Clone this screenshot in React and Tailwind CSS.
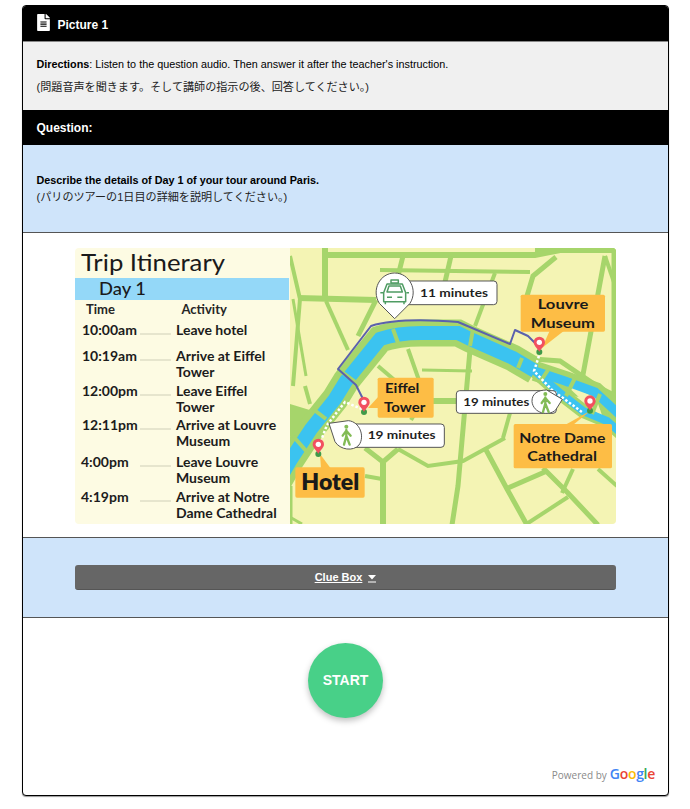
import React from 'react';
import { FaFileAlt } from 'react-icons/fa';

const rows = [
    { time: '10:00am', x: 82, y: 335, lines: ['Leave hotel'] },
    { time: '10:19am', x: 82, y: 361, lines: ['Arrive at Eiffel', 'Tower'] },
    { time: '12:00pm', x: 82, y: 396, lines: ['Leave Eiffel', 'Tower'] },
    { time: '12:11pm', x: 82, y: 430, lines: ['Arrive at Louvre', 'Museum'] },
    { time: '4:00pm', x: 81, y: 467, lines: ['Leave Louvre', 'Museum'] },
    { time: '4:19pm', x: 81, y: 502, lines: ['Arrive at Notre', 'Dame Cathedral'] },
];

// jalan pada peta: [path, tebal]
const roads = [
    ['M325 255 H535 L560 250 H620', 6],
    ['M380 270 L530 272', 4],
    ['M556 257 L533 276 L524 306', 5],
    ['M605 256 L582 380 L575 396', 5],
    ['M605 256 L616 288', 4],
    ['M495 273 L475 326', 4],
    ['M614 248 V400', 5],
    ['M325 248 V300', 6],
    ['M298 298 L376 300', 6],
    ['M403 256 L396 284', 5],
    ['M451 256 L445 282', 5],
    ['M290 256 L300 299 L293 386', 4],
    ['M293 299 L306 376', 3],
    ['M326 301 L348 350', 4],
    ['M376 300 L358 336', 5],
    ['M408 349 L421 386 L428 402', 4],
    ['M378 366 L412 395', 4],
    ['M422 370 L472 371', 3],
    ['M305 386 L310 404', 4],
    ['M433 401 H500', 6],
    ['M411 420 L420 405', 4],
    ['M383 463 V525', 6],
    ['M365 476 L382 479', 4],
    ['M365 448 L383 462 L398 449', 5],
    ['M398 449 L428 466 L463 461 L505 438', 4],
    ['M510 413 L503 438', 4],
    ['M470 350 L458 486 L452 525', 5],
    ['M485 448 L507 489 L527 525', 5],
    ['M508 488 L547 471', 5],
    ['M543 468 L568 493 L598 525', 5],
    ['M568 497 L525 525', 4],
    ['M573 469 L562 493', 4],
    ['M598 469 L617 486', 4],
    ['M291 486 V525', 3],
    ['M288 516 L302 524', 3],
    ['M533 359 L560 361 L600 388 L620 398', 5],
    ['M565 378 L586 400 L604 420', 3],
    ['M596 386 L604 420', 3],
];

const riverMain = 'M278 482 L290 461 L311 429 L335 399 L346 381 L380 339 C395 334 408 333 421 333 H458 L470 339 L513 358 L535 371';
const riverNorth = 'M535 371 L565 381 L595 392 L620 415';
const riverSouth = 'M535 371 L560 393 L583 411 L607 421 L622 434';

const bridges = [
    'M293 436 L308 453',
    'M313 409 L326 419',
    'M338 369 L358 384',
    'M393 329 L398 343',
    'M473 329 L470 346',
    'M522 358 L518 368',
    'M548 370 L540 382',
    'M575 378 L566 396',
    'M600 394 L592 414',
];

function Pin({ x, y }) {
    return (
        <g>
            <circle cx={x} cy={y + 25} r="9" fill="#3f9a48" />
            <path d={`M${x} ${y + 24} C${x - 8} ${y + 12} ${x - 17} ${y + 6} ${x - 17} ${y - 4} A17 17 0 1 1 ${x + 17} ${y - 4} C${x + 17} ${y + 6} ${x + 8} ${y + 12} ${x} ${y + 24} Z`} fill="#f2505f" />
            <circle cx={x} cy={y - 4} r="8" fill="#fff" />
        </g>
    );
}

function Walker({ x, y }) {
    return (
        <g fill="none" stroke="#82bb55" strokeWidth="7" strokeLinecap="round" strokeLinejoin="round">
            <circle cx={x} cy={y} r="6" fill="#82bb55" stroke="none" />
            <path d={`M${x} ${y + 10} V${y + 28} M${x} ${y + 12} L${x + 13} ${y + 27} M${x} ${y + 12} L${x - 11} ${y + 27} M${x} ${y + 28} L${x - 7} ${y + 54} M${x} ${y + 28} L${x + 10} ${y + 54}`} />
        </g>
    );
}

function Label({ x, y, w, h, tail, lines, size = 42, weight = 700 }) {
    return (
        <g>
            <path d={tail} fill="#fdbd45" />
            <rect x={x} y={y} width={w} height={h} rx="5" fill="#fdbd45" />
            {lines.map((l) => (
                <text key={l.t} x={l.x} y={l.y} textLength={l.w} lengthAdjust="spacingAndGlyphs" fontSize={size} fontWeight={weight} fill="#1a1a1a">{l.t}</text>
            ))}
        </g>
    );
}

function TripImage() {
    return (
        <svg viewBox="75 248 541 276" className="block w-[541px] h-[276px]" style={{ fontFamily: 'Lato, sans-serif' }}>
            <defs>
                <clipPath id="mapClip">
                    <path d="M290 248 H612 A4 4 0 0 1 616 252 V520 A4 4 0 0 1 612 524 H290 Z" />
                </clipPath>
            </defs>
            <rect x="75" y="248" width="541" height="276" rx="4" fill="#fdfbe3" />
            <text x="81" y="271" fontSize="24" textLength="144" lengthAdjust="spacingAndGlyphs" fill="#1a1a1a">Trip Itinerary</text>
            <rect x="75" y="278" width="214" height="22" fill="#94d8f8" />
            <text x="99" y="295" fontSize="17" fontWeight="500" textLength="47" lengthAdjust="spacingAndGlyphs" fill="#1a1a1a">Day 1</text>
            <text x="86" y="314" fontSize="13" fontWeight="700" fill="#262626">Time</text>
            <text x="181.5" y="314" fontSize="13" fontWeight="700" fill="#262626">Activity</text>
            {rows.map((r) => (
                <g key={r.time} fontSize="14" fontWeight="700" fill="#1c1c1c">
                    <text x={r.x} y={r.y}>{r.time}</text>
                    <line x1="140" x2="171" y1={r.y - 1} y2={r.y - 1} stroke="#cfcfb8" strokeWidth="1" />
                    {r.lines.map((t, i) => (
                        <text key={t} x="176" y={r.y + i * 16}>{t}</text>
                    ))}
                </g>
            ))}

            <g clipPath="url(#mapClip)">
                <rect x="290" y="248" width="326" height="276" fill="#f4f4b4" />
                <path d="M535 248 H616 V252 H560 L535 256 Z" fill="#a6d56b" />
                <path d="M290 404 L313 411 L296 440 L290 436 Z" fill="#a6d56b" />
                <path d="M305 452 L290 486 V470 Z" fill="#a6d56b" />
                <g fill="none" stroke="#a6d56b">
                    {roads.map(([d, w]) => <path key={d} d={d} strokeWidth={w} />)}
                    <path d={riverMain} strokeWidth="27" />
                    <path d={riverNorth} strokeWidth="20" />
                    <path d={riverSouth} strokeWidth="14" />
                </g>
                <path d="M562 381 L596 398 L603 418 L584 402 Z" fill="#f4f4b4" />
                <g fill="none" stroke="#3bc3f0">
                    <path d={riverMain} strokeWidth="14" />
                    <path d={riverNorth} strokeWidth="9" />
                    <path d={riverSouth} strokeWidth="8" />
                </g>
                <g fill="none" stroke="#a6d56b" strokeWidth="4">
                    {bridges.map((d) => <path key={d} d={d} />)}
                </g>

                {/* rute taksi */}
                <path d="M363 399 L356 385 L338 369 L371 326 C390 320 420 319 458 322 L510 344 L515 330 L528 336 L538 346" fill="none" stroke="#5b61ad" strokeWidth="2" strokeLinejoin="round" />
                {/* rute jalan kaki */}
                <path d="M319 446 L327 425 L345 402 L362 409" fill="none" stroke="#fff" strokeWidth="2.5" strokeDasharray="2.5 2" />
                <path d="M539 356 L534 371 L552 390 L582 412" fill="none" stroke="#fff" strokeWidth="2.5" strokeDasharray="2.5 2" />
            </g>

            {/* label dan gelembung, koordinat skala 3x */}
            <g transform="translate(285 240) scale(0.33333)">
                <rect x="340" y="123" width="296" height="71" rx="10" fill="#fff" stroke="#555" strokeWidth="3" />
                <path d="M329 236 L283 190 C258 150 285 99 329 99 C373 99 400 150 375 190 Z" fill="#fff" stroke="#555" strokeWidth="3" />
                <g fill="none" stroke="#4f9c63" strokeWidth="4.5" strokeLinejoin="round">
                    <rect x="318" y="120" width="22" height="9" />
                    <path d="M306 132 H352 L362 158 V185 H296 V158 Z" />
                    <path d="M312 138 H346 L352 156 H306 Z" />
                    <path d="M301 185 V193 M357 185 V193 M294 158 H286 M364 158 H372 M306 172 H321 M337 172 H352" />
                </g>
                <text x="405" y="172" fontSize="35" fontWeight="700" fill="#1f1f1f" textLength="204" lengthAdjust="spacingAndGlyphs">11 minutes</text>

                <rect x="514" y="452" width="300" height="68" rx="10" fill="#fff" stroke="#555" strokeWidth="3" />
                <path d="M832 478 L812 510 C790 530 745 520 741 485 C740 460 760 450 785 450 Z" fill="#fff" stroke="#555" strokeWidth="3" />
                <Walker x={781} y={462} />
                <text x="535" y="497" fontSize="35" fontWeight="700" fill="#1f1f1f" textLength="198" lengthAdjust="spacingAndGlyphs">19 minutes</text>

                <rect x="180" y="552" width="298" height="70" rx="10" fill="#fff" stroke="#555" strokeWidth="3" />
                <path d="M132 550 L190 542 C225 545 240 590 222 615 C205 635 165 630 150 605 Z" fill="#fff" stroke="#555" strokeWidth="3" />
                <Walker x={184} y={560} />
                <text x="248" y="598" fontSize="35" fontWeight="700" fill="#1f1f1f" textLength="204" lengthAdjust="spacingAndGlyphs">19 minutes</text>

                <Label x={707} y={164} w={253} h={111} tail="M771 324 L795 270 H840 Z" size={42}
                    lines={[{ t: 'Louvre', x: 758, y: 208, w: 152 }, { t: 'Museum', x: 737, y: 265, w: 193 }]} />
                <Label x={278} y={413} w={168} h={120} tail="M249 504 L282 468 V504 Z" size={42}
                    lines={[{ t: 'Eiffel', x: 300, y: 460, w: 103 }, { t: 'Tower', x: 297, y: 515, w: 124 }]} />
                <Label x={686} y={552} w={295} h={133} tail="M915 513 L840 555 H864 Z" size={41}
                    lines={[{ t: 'Notre Dame', x: 703, y: 610, w: 258 }, { t: 'Cathedral', x: 727, y: 663, w: 209 }]} />
                <Label x={31} y={682} w={208} h={91} tail="M105 642 L108 686 H138 Z" size={66} weight={800}
                    lines={[{ t: 'Hotel', x: 49, y: 750, w: 174 }]} />

                <Pin x={100} y={617} />
                <Pin x={237} y={491} />
                <Pin x={763} y={311} />
                <Pin x={915} y={487} />
            </g>
        </svg>
    );
}

export default function App() {
    return (
        <div className="bg-white pt-[5px] pl-[22px] w-[690px] h-[809px] font-['Liberation_Sans','Noto_Sans_CJK_JP',sans-serif] text-black">
            <div className="w-[647px] h-[791px] border-[1.5px] border-black rounded-[4px] overflow-hidden flex flex-col bg-white shadow-[0_1px_1px_rgba(0,0,0,0.4)]">
                <div className="h-[35px] shrink-0 bg-black text-white flex items-center gap-[8px] pl-[13.5px]">
                    <FaFileAlt className="w-[13px] h-[17px] -mt-[2px]" />
                    <span className="font-bold text-[12px] mt-[2px]">Picture 1</span>
                </div>

                <div className="h-[69px] shrink-0 bg-[#f0f0f0] border-t border-[#888] pl-[13.5px] pt-[15px] text-[10.8px]">
                    <p className="leading-[14px]"><b>Directions</b>: Listen to the question audio. Then answer it after the teacher's instruction.</p>
                    <p className="mt-[9px] text-[11.1px] leading-[15px] text-[#222]">(問題音声を聞きます。そして講師の指示の後、回答してください。)</p>
                </div>

                <div className="h-[35px] shrink-0 bg-black text-white flex items-center pl-[13.5px]">
                    <span className="font-bold text-[12px]">Question:</span>
                </div>

                <div className="h-[88px] shrink-0 bg-[#cfe4fa] border-b border-[#555] pl-[13.5px] pt-[28px]">
                    <p className="font-bold text-[10.8px] leading-[14px]">Describe the details of Day 1 of your tour around Paris.</p>
                    <p className="mt-[1px] text-[11.1px] leading-[19px] text-[#222]">(パリのツアーの1日目の詳細を説明してください。)</p>
                </div>

                <div className="h-[304px] shrink-0 flex justify-center pt-[15px]">
                    <TripImage />
                </div>

                <div className="h-[81px] shrink-0 bg-[#cfe4fa] border-y border-[#555] px-[52px] pt-[27px]">
                    <div className="h-[25px] bg-[#666] rounded-[3px] border-b border-[#555] text-white text-[11px] font-bold flex items-center justify-center gap-[6px]">
                        <span className="underline">Clue Box</span>
                        <svg width="8" height="8" viewBox="0 0 8 8" className="mt-[3px]">
                            <path d="M0 0 H8 L4 4.5 Z M0 6.5 H8 V7.5 H0 Z" fill="#fff" />
                        </svg>
                    </div>
                </div>

                <div className="flex-1 relative">
                    <div className="mt-[25px] mx-auto w-[75px] h-[75px] rounded-full bg-[#48d088] shadow-[0_3px_6px_rgba(0,0,0,0.25)] text-white font-bold text-[14px] flex items-center justify-center">START</div>
                    <div className="absolute right-[13px] bottom-[12px] flex items-baseline gap-[3px] font-['Open_Sans',sans-serif]">
                        <span className="text-[10px] text-[#8a8a8a]">Powered by</span>
                        <span className="text-[14px] font-semibold tracking-[-0.3px] leading-[18px]">
                            <span className="text-[#4285f4]">G</span>
                            <span className="text-[#ea4335]">o</span>
                            <span className="text-[#fbbc05]">o</span>
                            <span className="text-[#4285f4]">g</span>
                            <span className="text-[#34a853]">l</span>
                            <span className="text-[#ea4335]">e</span>
                        </span>
                    </div>
                </div>
            </div>
        </div>
    );
}
